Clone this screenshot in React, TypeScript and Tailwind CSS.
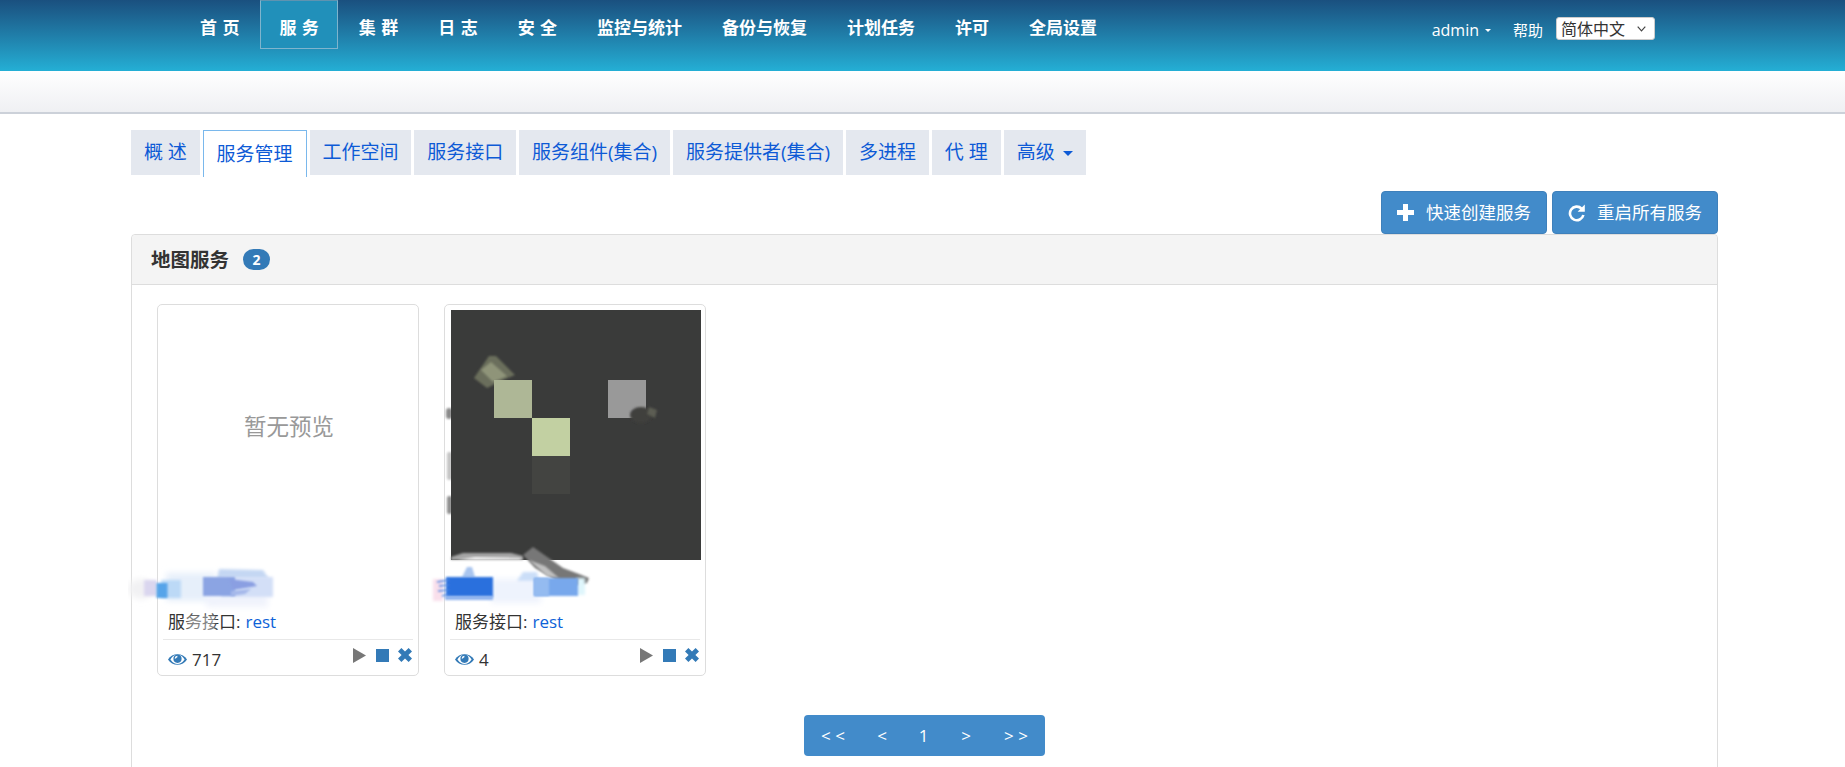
import React from "react";

const navItems = ["首 页", "服 务", "集 群", "日 志", "安 全", "监控与统计", "备份与恢复", "计划任务", "许可", "全局设置"];
const tabs = ["概 述", "服务管理", "工作空间", "服务接口", "服务组件(集合)", "服务提供者(集合)", "多进程", "代 理"];

function Eye() {
  return (
    <svg width="19" height="13" viewBox="0 0 19 13" className="shrink-0">
      <path d="M0 6.5C4 -.5 15 -.5 19 6.5C15 13.5 4 13.5 0 6.5Z" fill="#337ab7" />
      <path d="M2.4 6.5C4.4 3.4 6 2.4 7 2.2A4.4 4.4 0 0 0 12 2.2C13 2.4 14.6 3.4 16.6 6.5C14 10 12 10.9 9.5 10.9C7 10.9 5 10 2.4 6.5Z" fill="#fff" />
      <circle cx="9.5" cy="5.8" r="4.1" fill="#337ab7" />
      <path d="M6.6 5.6A3 3 0 0 1 9.4 2.8L9.4 4.2A1.6 1.6 0 0 0 8 5.6Z" fill="#fff" />
    </svg>
  );
}

function Actions() {
  return (
    <div className="flex items-start pr-px -mt-[5px]">
      <svg width="13" height="15" viewBox="0 0 13 15" className="mr-[10px]">
        <path d="M0 0L13 7.5L0 15Z" fill="#777" />
      </svg>
      <svg width="13" height="13" viewBox="0 0 13 13" className="mr-[9px] mt-px">
        <rect width="13" height="13" fill="#337ab7" />
      </svg>
      <svg width="14" height="14" viewBox="0 0 14 14">
        <path d="M3.4 0L7 3.6L10.6 0L14 3.4L10.4 7L14 10.6L10.6 14L7 10.4L3.4 14L0 10.6L3.6 7L0 3.4Z" fill="#337ab7" />
      </svg>
    </div>
  );
}

function Scribble1() {
  return (
    <svg width="320" height="70" viewBox="127 564 320 70" className="absolute left-[-30px] top-[260px] pointer-events-none">
      <defs>
        <filter id="b0" x="-20%" y="-60%" width="140%" height="220%"><feGaussianBlur stdDeviation="1" /></filter>
        <filter id="b1" x="-20%" y="-40%" width="140%" height="180%"><feGaussianBlur stdDeviation="1.8" /></filter>
        <filter id="b2" x="-20%" y="-40%" width="140%" height="180%"><feGaussianBlur stdDeviation="3.4" /></filter>
      </defs>
      <ellipse cx="140" cy="588" rx="13" ry="10" fill="#f1f1f3" filter="url(#b2)" />
      <rect x="165" y="572" width="50" height="28" fill="#e6effa" filter="url(#b2)" />
      <rect x="205" y="592" width="62" height="14" fill="#f0f3fc" filter="url(#b2)" />
      <rect x="143" y="579" width="13" height="16" fill="#dad6ef" filter="url(#b1)" />
      <rect x="160" y="579" width="20" height="18" fill="#bcd9f6" filter="url(#b1)" />
      <rect x="155.5" y="582" width="11" height="15" fill="#57a4e9" filter="url(#b0)" />
      <path d="M218 568L262 569L268 578L216 578Z" fill="#c4d7f3" filter="url(#b1)" />
      <rect x="220" y="576" width="52" height="20" fill="#d3dff7" filter="url(#b1)" />
      <rect x="202" y="576" width="32" height="19" fill="#8ba4e3" filter="url(#b0)" />
      <path d="M228 578L252 581L256 585L232 589Z" fill="#8a9fe2" filter="url(#b0)" />
      <path d="M230 590L250 588L244 593L230 595Z" fill="#a5b8ea" filter="url(#b0)" />
      <rect x="186" y="614" width="28" height="18" fill="#fff" opacity="0.4" filter="url(#b1)" />
    </svg>
  );
}

function Scribble2() {
  return (
    <svg width="320" height="50" viewBox="427 564 320 50" className="absolute left-[-17px] top-[260px] pointer-events-none">
      <rect x="490" y="578" width="50" height="24" fill="#eef3fd" filter="url(#b2)" />
      <rect x="432" y="578" width="10" height="22" fill="#f9dfeb" filter="url(#b1)" />
      <path d="M466 566L471 566L474 576L461 576Z" fill="#a9c5ef" filter="url(#b0)" />
      <path d="M522 571L536 571L538 580L516 580Z" fill="#cbdef8" filter="url(#b1)" />
      <rect x="576" y="577" width="8" height="17" fill="#dff6fc" filter="url(#b1)" />
      <rect x="445" y="576" width="47" height="20" fill="#2b6fdd" filter="url(#b0)" />
      <path d="M448 579L436 581M448 584L438 585M448 589L437 590M448 593L441 595" stroke="#4e86e3" strokeWidth="1.6" filter="url(#b0)" />
      <rect x="444" y="595" width="48" height="4" fill="#8fb3ee" filter="url(#b0)" />
      <rect x="533" y="577" width="44" height="18" fill="#78a8ec" filter="url(#b0)" />
      <rect x="533" y="577" width="15" height="18" fill="#94bbf0" filter="url(#b0)" />
    </svg>
  );
}

function MapPreview() {
  return (
    <svg width="250" height="250" viewBox="0 0 250 250" className="block overflow-visible">
      <defs>
        <filter id="s1" x="-30%" y="-30%" width="160%" height="160%"><feGaussianBlur stdDeviation="0.9" /></filter>
      </defs>
      <rect x="-5" y="98" width="6" height="11" rx="3" fill="#8a8a8a" filter="url(#s1)" />
      <rect x="-4" y="142" width="5" height="28" rx="2" fill="#c4c4c4" filter="url(#s1)" />
      <rect x="-4" y="186" width="5" height="18" rx="2" fill="#8e8e8e" filter="url(#s1)" />
      <rect width="250" height="250" fill="#3a3b3a" />
      <path d="M23 68L38 46L45 46L64 65L52 70L36 78Z" fill="#6a6e5b" filter="url(#s1)" />
      <path d="M30 60L40 52L56 66L42 72Z" fill="#8f9479" filter="url(#s1)" />
      <rect x="43" y="70" width="38" height="38" fill="#aeb796" />
      <rect x="81" y="108" width="38" height="38" fill="#c2d0a2" />
      <rect x="81" y="146" width="38" height="38" fill="#434441" />
      <rect x="157" y="70" width="38" height="38" fill="#999999" />
      <ellipse cx="190" cy="105" rx="11" ry="8" fill="#403f3c" filter="url(#s1)" />
      <path d="M198 97L206 100L204 108L196 104Z" fill="#5b5d52" filter="url(#s1)" />
      <path d="M0 247L12 243L60 243L72 246L72 250L0 250Z" fill="#a5a5a5" filter="url(#s1)" />
      <path d="M6 250L24 247L68 248L72 250Z" fill="#f2f2f2" filter="url(#s1)" />
      <path d="M72 245L82 237L112 258L128 264L138 268L136 273L122 276L108 272L84 258Z" fill="#777" filter="url(#s1)" />
      <path d="M78 250L94 256L108 268L96 266Z" fill="#c0c0c0" filter="url(#s1)" />
    </svg>
  );
}

function Card({ preview, count, scribble }: { preview: React.ReactNode; count: string; scribble: React.ReactNode }) {
  return (
    <div className="relative w-[262px] border border-[#ddd] rounded-[5px] px-[5px] pt-[5px] bg-white">
      <div className="w-[250px] h-[250px] ml-px">{preview}</div>
      <div className="h-[47px]" />
      <div className="h-[33px] border-b border-[#e8e8e8] px-[5px] pb-[3px] flex items-center text-[17px] leading-none text-[#333]">
        服务接口:<span className="ml-[5px] text-[17px] text-[#0d62d8]">rest</span>
      </div>
      <div className="h-[35px] flex items-center justify-between">
        <div className="flex items-center gap-[5px] pl-[5px] pt-[3px] text-[#333] text-[17px] leading-none">
          <Eye />
          <span>{count}</span>
        </div>
        <Actions />
      </div>
      {scribble}
    </div>
  );
}

export default function App() {
  return (
    <div className="h-screen overflow-hidden bg-white font-['Open_Sans','Noto_Sans_CJK_SC',sans-serif]">
      <header className="h-[71px] bg-gradient-to-b from-[#1a507f] to-[#24afd5] flex justify-between pl-[181px] pr-[190px]">
        <nav className="flex items-start gap-[2px]">
          {navItems.map((n) => (
            <a
              key={n}
              className={
                "h-[49px] px-[18px] border flex items-center text-[17px] font-bold text-white whitespace-pre [word-spacing:1px] pt-[7px] " +
                (n === "服 务" ? "bg-[#2190ba] border-[#7fb4cd] border-t-[#5f93b0]" : "border-transparent")
              }
            >
              {n}
            </a>
          ))}
        </nav>
        <div className="flex items-center h-[23px] mt-[17px] text-white">
          <span className="text-[16px] leading-none pt-[3px]">admin</span>
          <span className="ml-[6px] mt-[4px] w-0 h-0 border-x-[3px] border-x-transparent border-t-[3px] border-t-white" />
          <span className="ml-[22px] text-[15px] leading-none pt-[4px]">帮助</span>
          <div className="relative ml-[13px]">
            <select className="block w-[99px] h-[23px] bg-white text-[#333] text-[16px] leading-none rounded-[3px] border border-[#ccc] pl-[4px] appearance-none">
              <option>简体中文</option>
            </select>
            <svg width="9" height="6" viewBox="0 0 9 6" className="absolute right-[9px] top-[9px] pointer-events-none">
              <path d="M.7 .7L4.5 4.8L8.3 .7" fill="none" stroke="#444" strokeWidth="1.2" />
            </svg>
          </div>
        </div>
      </header>
      <div className="h-[43px] bg-gradient-to-b from-white to-[#eff0f3] border-b-2 border-[#ccd1d9]" />
      <main className="ml-[131px] w-[1587px]">
        <div className="flex items-start gap-[3px] pt-[16px] h-[61px]">
          {tabs.map((t) =>
            t === "服务管理" ? (
              <a key={t} className="h-[47px] px-[12.9px] bg-white border border-b-0 border-[#7ab8ec] flex items-center text-[19px] text-[#0d5ad6]">
                {t}
              </a>
            ) : (
              <a key={t} className="h-[45px] px-[12.9px] bg-[#e4e8ef] flex items-center text-[19px] text-[#0d5ad6] whitespace-pre">
                {t}
              </a>
            )
          )}
          <a className="h-[45px] pl-[13px] pr-[13px] bg-[#e4e8ef] flex items-center gap-[8px] text-[19px] text-[#0d5ad6]">
            高级
            <span className="mt-[2px] w-0 h-0 border-x-[5px] border-x-transparent border-t-[5px] border-t-[#0d5ad6]" />
          </a>
        </div>
        <div className="flex justify-end gap-[5px] pt-[16px]">
          <button className="h-[43px] w-[166px] bg-[#428bca] border border-[#3e80bb] rounded-[4px] flex items-center pl-[15px] text-white text-[17.5px]">
            <svg width="17" height="17" viewBox="0 0 17 17" className="mr-[12px]">
              <path d="M6 0H11V6H17V11H11V17H6V11H0V6H6Z" fill="#fff" />
            </svg>
            快速创建服务
          </button>
          <button className="h-[43px] w-[166px] bg-[#428bca] border border-[#3e80bb] rounded-[4px] flex items-center pl-[15px] text-white text-[17.5px]">
            <svg width="18" height="18" viewBox="0 0 18 18" className="mr-[11px]">
              <path d="M13.6 4.6A6.8 6.8 0 1 0 15.4 11" fill="none" stroke="#fff" strokeWidth="2.6" />
              <path d="M16.8 .6L16.8 7.8L9.6 7.8Z" fill="#fff" />
            </svg>
            重启所有服务
          </button>
        </div>
        <section className="border border-[#ddd] rounded-[4px] pb-[40px]">
          <div className="h-[50px] bg-[#f4f4f4] border-b border-[#ddd] flex items-center pl-[19px] rounded-t-[4px]">
            <h3 className="text-[19.5px] font-bold leading-none text-[#333]">地图服务</h3>
            <span className="ml-[14px] w-[27px] h-[21px] rounded-full bg-[#337ab7] text-white text-[14px] font-bold flex items-center justify-center">2</span>
          </div>
          <div className="flex gap-[25px] pl-[25px] pt-[19px]">
            <Card
              count="717"
              scribble={<Scribble1 />}
              preview={
                <div className="h-full flex items-center justify-center pb-[16px] text-[22.5px] text-[#999]">暂无预览</div>
              }
            />
            <Card count="4" scribble={<Scribble2 />} preview={<MapPreview />} />
          </div>
          <div className="flex justify-center pt-[39px]">
            <div className="flex h-[41px] bg-[#428bca] rounded-[4px] text-white text-[17px] items-center">
              <a className="w-[58px] text-center">&lt; &lt;</a>
              <a className="w-[40px] text-center">&lt;</a>
              <a className="w-[43px] text-center">1</a>
              <a className="w-[42px] text-center">&gt;</a>
              <a className="w-[58px] text-center">&gt; &gt;</a>
            </div>
          </div>
        </section>
      </main>
    </div>
  );
}
